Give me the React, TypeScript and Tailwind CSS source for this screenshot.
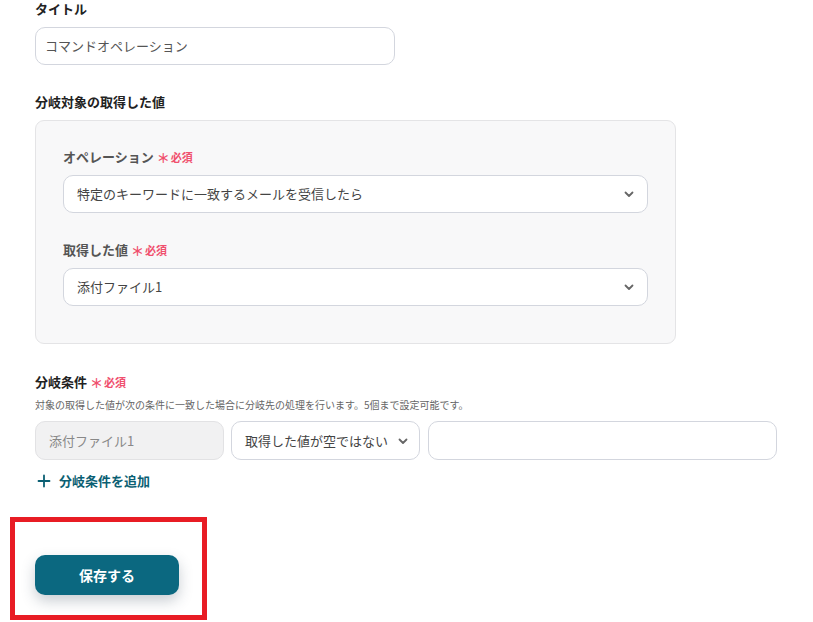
import React from 'react';

const font = { fontFamily: '"Noto Sans CJK JP", "Noto Sans", sans-serif' };

const Chevron = () => (
  <svg width="12" height="12" viewBox="0 0 12 12" fill="none" className="shrink-0">
    <path d="M2.5 4.5L6 8L9.5 4.5" stroke="#666" strokeWidth="1.8" strokeLinecap="round" strokeLinejoin="round" />
  </svg>
);

const Required = () => (
  <span className="ml-[3px] inline-flex items-center text-[11px] font-bold text-[#f0506e]">
    <span className="mr-[1px] text-[13px] leading-none">＊</span>必須
  </span>
);

const SelectBox = ({ value }: { value: string }) => (
  <div className="flex h-[38px] w-full items-center justify-between rounded-[10px] border border-[#d3d6de] bg-white pl-[13px] pr-[12px] text-[13px] text-[#444]">
    <span>{value}</span>
    <Chevron />
  </div>
);

export default function App() {
  return (
    <div className="min-h-[622px] w-[813px] bg-white" style={font}>
      <div className="pl-[35px]">
        <div className="pt-[1px] text-[13px] font-bold leading-[16px] text-[#222]">タイトル</div>
        <div className="mt-[10px] flex h-[38px] w-[360px] items-center rounded-[10px] border border-[#d3d6de] px-[9px] text-[13px] text-[#555]">
          コマンドオペレーション
        </div>

        <div className="mt-[29px] text-[13px] font-bold leading-[16px] text-[#222]">分岐対象の取得した値</div>
        <div className="mt-[10px] h-[224px] w-[641px] rounded-[9px] border border-[#e4e4e6] bg-[#f8f8f9] px-[27px] pt-[28px]">
          <div className="flex items-center text-[13px] font-bold leading-[16px] text-[#555]">
            オペレーション
            <Required />
          </div>
          <div className="mt-[10px]">
            <SelectBox value="特定のキーワードに一致するメールを受信したら" />
          </div>
          <div className="mt-[29px] flex items-center text-[13px] font-bold leading-[16px] text-[#555]">
            取得した値
            <Required />
          </div>
          <div className="mt-[10px]">
            <SelectBox value="添付ファイル1" />
          </div>
        </div>

        <div className="mt-[30px] flex items-center text-[13px] font-bold leading-[16px] text-[#222]">
          分岐条件
          <Required />
        </div>
        <div className="mt-[8px] text-[10px] leading-[14px] text-[#666]">
          対象の取得した値が次の条件に一致した場合に分岐先の処理を行います。5個まで設定可能です。
        </div>
        <div className="mt-[9px] flex items-center">
          <div className="flex h-[39px] w-[189px] items-center rounded-[10px] border border-[#e2e2e4] bg-[#f1f1f2] px-[13px] text-[13px] text-[#888]">
            添付ファイル1
          </div>
          <div className="ml-[7px] flex h-[39px] w-[189px] items-center justify-between rounded-[10px] border border-[#d3d6de] bg-white pl-[13px] pr-[10px] text-[13px] text-[#444]">
            <span>取得した値が空ではない</span>
            <Chevron />
          </div>
          <div className="ml-[8px] h-[39px] w-[349px] rounded-[10px] border border-[#d3d6de] bg-white" />
        </div>
        <div className="mt-[11px] flex items-center text-[13px] font-bold leading-[20px] text-[#0b5f73]">
          <svg width="14" height="14" viewBox="0 0 14 14" className="ml-[2px] mr-[8px]">
            <path d="M7 1.5V12.5M1.5 7H12.5" stroke="#0b5f73" strokeWidth="1.8" strokeLinecap="round" />
          </svg>
          分岐条件を追加
        </div>
      </div>

      <div className="ml-[10px] mt-[26px] h-[103px] w-[197px] border-[5px] border-[#e81c24] pl-[20px] pt-[33px]">
        <button className="flex h-[40px] w-[144px] items-center justify-center rounded-[10px] bg-[#0b6880] text-[14px] font-bold text-white shadow-[0_6px_14px_rgba(40,60,80,0.25)]">
          保存する
        </button>
      </div>
    </div>
  );
}
